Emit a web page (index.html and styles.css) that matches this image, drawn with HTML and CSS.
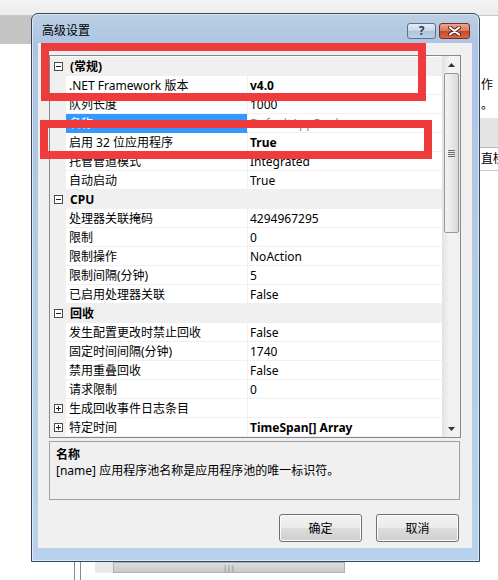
FILE: index.html
```html
<!DOCTYPE html>
<html lang="zh-CN">
<head>
  <meta charset="UTF-8" />
  <title>高级设置</title>
  <link rel="stylesheet" href="styles.css">
</head>
<body>

  <!-- window behind the dialog -->
  <div class="desk">
    <div class="desk-top"></div>
    <div class="desk-band"><div class="desk-band-left"></div></div>
    <div class="desk-main">
      <div class="desk-side">
        <span class="side-text first">作</span>
        <span class="side-text">。</span>
        <div class="side-btn"></div>
        <span class="side-text line">直楼</span>
      </div>
    </div>
    <div class="desk-bottom">
      <div class="vlines"></div>
      <div class="hscroll">
        <span class="hs-arrow"></span>
        <div class="hs-thumb">|||</div>
      </div>
    </div>
  </div>

  <!-- Advanced settings dialog -->
  <div class="dialog">
    <div class="titlebar">
      <span class="title">高级设置</span>
      <div class="title-btns">
        <span class="tbtn help">?</span>
        <span class="tbtn close">
          <svg width="13" height="10" viewBox="0 0 13 10">
            <path d="M2 1.5 L11 8.5 M11 1.5 L2 8.5" stroke="#5a2016" stroke-width="4" stroke-linecap="round"/>
            <path d="M2 1.5 L11 8.5 M11 1.5 L2 8.5" stroke="#fff" stroke-width="2.2" stroke-linecap="round"/>
          </svg>
        </span>
      </div>
    </div>

    <div class="client">
      <div class="pgrid">
        <div class="pg-rows">
          <div class="pg-row cat"><span class="gut"><i class="exp"></i></span><span class="cn">(常规)</span></div>
          <div class="pg-row"><span class="gut"></span><span class="pn">.NET Framework 版本</span><span class="pv b">v4.0</span></div>
          <div class="pg-row"><span class="gut"></span><span class="pn">队列长度</span><span class="pv">1000</span></div>
          <div class="pg-row"><span class="gut"></span><span class="pn sel">名称</span><span class="pv dim">DefaultAppPool</span></div>
          <div class="pg-row"><span class="gut"></span><span class="pn">启用 32 位应用程序</span><span class="pv b">True</span></div>
          <div class="pg-row"><span class="gut"></span><span class="pn">托管管道模式</span><span class="pv">Integrated</span></div>
          <div class="pg-row"><span class="gut"></span><span class="pn">自动启动</span><span class="pv">True</span></div>
          <div class="pg-row cat"><span class="gut"><i class="exp"></i></span><span class="cn">CPU</span></div>
          <div class="pg-row"><span class="gut"></span><span class="pn">处理器关联掩码</span><span class="pv">4294967295</span></div>
          <div class="pg-row"><span class="gut"></span><span class="pn">限制</span><span class="pv">0</span></div>
          <div class="pg-row"><span class="gut"></span><span class="pn">限制操作</span><span class="pv">NoAction</span></div>
          <div class="pg-row"><span class="gut"></span><span class="pn">限制间隔(分钟)</span><span class="pv">5</span></div>
          <div class="pg-row"><span class="gut"></span><span class="pn">已启用处理器关联</span><span class="pv">False</span></div>
          <div class="pg-row cat"><span class="gut"><i class="exp"></i></span><span class="cn">回收</span></div>
          <div class="pg-row"><span class="gut"></span><span class="pn">发生配置更改时禁止回收</span><span class="pv">False</span></div>
          <div class="pg-row"><span class="gut"></span><span class="pn">固定时间间隔(分钟)</span><span class="pv">1740</span></div>
          <div class="pg-row"><span class="gut"></span><span class="pn">禁用重叠回收</span><span class="pv">False</span></div>
          <div class="pg-row"><span class="gut"></span><span class="pn">请求限制</span><span class="pv">0</span></div>
          <div class="pg-row"><span class="gut"><i class="exp plus"></i></span><span class="pn">生成回收事件日志条目</span><span class="pv"></span></div>
          <div class="pg-row"><span class="gut"><i class="exp plus"></i></span><span class="pn">特定时间</span><span class="pv b">TimeSpan[] Array</span></div>
        </div>
        <div class="vscroll">
          <div class="sb-btn">
            <svg width="7" height="4" viewBox="0 0 7 4"><polygon points="0,4 3.5,0 7,4" fill="#333"/></svg>
          </div>
          <div class="sb-track">
            <div class="sb-thumb"><span class="grip"></span></div>
          </div>
          <div class="sb-btn">
            <svg width="7" height="4" viewBox="0 0 7 4"><polygon points="0,0 3.5,4 7,0" fill="#333"/></svg>
          </div>
        </div>
      </div>

      <div class="desc">
        <div class="desc-title">名称</div>
        <div>[name] 应用程序池名称是应用程序池的唯一标识符。</div>
      </div>

      <div class="actions">
        <button class="btn">确定</button>
        <button class="btn">取消</button>
      </div>
    </div>
  </div>

  <!-- red highlight marks drawn over the screenshot -->
  <div class="mark mark-1"></div>
  <div class="mark mark-2"></div>

</body>
</html>
```

FILE: styles.css
```css
* { margin: 0; padding: 0; box-sizing: border-box; }

body {
  width: 498px;
  height: 580px;
  overflow: hidden;
  position: relative;
  background: #fff;
  color: #000;
  font-family: 'Noto Sans', 'Noto Sans CJK SC', sans-serif;
  font-size: 12px;
}

/* background window */
.desk { display: flex; flex-direction: column; height: 580px; }

.desk-top {
  height: 16px;
  background: linear-gradient(#f4f4f4, #ececec);
  border-bottom: 1px solid #c9c9c9;
}

.desk-band { height: 28px; display: flex; }
.desk-band-left { width: 32px; background: #c4c4c4; }

.desk-main { height: 518px; display: flex; justify-content: flex-end; }

.desk-side {
  width: 18px;
  padding-top: 33px;
  display: flex;
  flex-direction: column;
  overflow: hidden;
}

.side-text { line-height: 16px; white-space: nowrap; padding-left: 1px; }
.side-text + .side-text { margin-top: 4px; }
.side-btn { height: 30px; margin-top: 5px; background: #e4e4e4; border-bottom: 1px solid #b9b9b9; }
.side-text.line { margin-top: 3px; border-bottom: 1px solid #c8c8c8; padding-bottom: 3px; }

.desk-bottom { height: 18px; display: flex; padding-left: 74px; }
.vlines { width: 7px; border-left: 1px solid #8c8c8c; border-right: 1px solid #8c8c8c; }

.hscroll {
  margin-left: 14px;
  width: 250px;
  height: 11px;
  display: flex;
  background: #d9d9d9;
}
.hs-arrow { width: 18px; background: #e9e9e9; }
.hs-thumb {
  flex: 1;
  background: linear-gradient(#dcdcdc, #c9c9c9);
  border: 1px solid #b0b0b0;
  color: #777;
  font-size: 7px;
  line-height: 9px;
  text-align: center;
}

/* dialog */
.dialog {
  position: absolute;
  left: 31px;
  top: 13px;
  width: 449px;
  height: 549px;
  border: 1px solid #34465a;
  border-radius: 7px 7px 0 0;
  background: linear-gradient(#bccfe4 0, #adc5e2 30px, #b8d1ec 100%);
  box-shadow: inset 0 0 0 1px rgba(255,255,255,0.55);
  display: flex;
  flex-direction: column;
}

.titlebar {
  height: 29px;
  display: flex;
  align-items: flex-start;
  padding: 9px 9px 0 10px;
}

.title { line-height: 16px; font-size: 12px; }

.title-btns { margin-left: auto; display: flex; gap: 3px; }

.tbtn {
  height: 16px;
  border: 1px solid #5d7089;
  border-radius: 3px;
  display: flex;
  align-items: center;
  justify-content: center;
}

.help {
  width: 29px;
  background: linear-gradient(#e3ecf6 0, #c8d7e9 50%, #aec3dd 50%, #bcd0e6 100%);
  color: #2c3d58;
  font-weight: bold;
  font-size: 12px;
  line-height: 14px;
}

.close {
  width: 31px;
  border-color: #7a2d22;
  background: linear-gradient(#eaa692 0, #d9785f 50%, #c4462b 50%, #d66a48 100%);
}

.client {
  margin: 0 7px 13px 6px;
  height: 505px;
  background: #f0f0f0;
  padding: 12px 13px 0 11px;
  display: flex;
  flex-direction: column;
}

/* property grid */
.pgrid {
  width: 412px;
  height: 383px;
  border: 1px solid #828790;
  background: #fff;
  display: flex;
}

.pg-rows { flex: 1; padding-top: 1px; }

.pg-row { height: 19px; display: flex; line-height: 20px; }

.gut {
  width: 16px;
  background: #f0f0f0;
  display: flex;
  align-items: center;
  justify-content: center;
}

.exp {
  width: 9px;
  height: 9px;
  border: 1px solid #4a4a4a;
  background: #fff;
  position: relative;
}
.exp::before {
  content: '';
  position: absolute;
  left: 1px; top: 3px;
  width: 5px; height: 1px;
  background: #222;
}
.exp.plus::after {
  content: '';
  position: absolute;
  left: 3px; top: 1px;
  width: 1px; height: 5px;
  background: #222;
}

.pn {
  width: 182px;
  padding-left: 3px;
  border-right: 1px solid #f0f0f0;
  border-bottom: 1px solid #f0f0f0;
  white-space: nowrap;
  overflow: hidden;
}

.pv {
  flex: 1;
  padding-left: 2px;
  border-bottom: 1px solid #f0f0f0;
  white-space: nowrap;
  overflow: hidden;
}

.pn.sel { background: #3399ff; color: #fff; border-bottom-color: #3399ff; }
.pv.dim { color: #8a8a8a; }
.b { font-weight: bold; }

.pg-row.cat { background: #f0f0f0; font-weight: bold; }
.cn { padding-left: 4px; }

.vscroll {
  width: 18px;
  display: flex;
  flex-direction: column;
  background: linear-gradient(90deg, #e4e4e4, #f3f3f3 40%, #f0f0f0);
  border-left: 1px solid #e2e2e2;
}

.sb-btn {
  height: 17px;
  display: flex;
  align-items: center;
  justify-content: center;
}

.sb-track { flex: 1; padding: 0 1px; }

.sb-thumb {
  height: 160px;
  border: 1px solid #979797;
  border-radius: 2px;
  background: linear-gradient(90deg, #f3f3f3, #e8e8e8 50%, #d9d9d9);
  display: flex;
  align-items: center;
  justify-content: center;
}

.grip {
  width: 7px;
  height: 7px;
  background: repeating-linear-gradient(#6f6f6f 0 1px, transparent 1px 2px);
}

/* description */
.desc {
  margin-top: 3px;
  width: 411px;
  height: 59px;
  border: 1px solid #a0a0a0;
  padding: 5px 6px 0;
  line-height: 16px;
}

.desc-title { font-weight: bold; }

.actions {
  margin-top: 14px;
  display: flex;
  justify-content: flex-end;
  gap: 14px;
}

.btn {
  width: 83px;
  height: 28px;
  border: 1px solid #707070;
  border-radius: 3px;
  background: linear-gradient(#f2f2f2 0, #ebebeb 50%, #dddddd 50%, #cfcfcf 100%);
  box-shadow: inset 0 0 0 1px #fcfcfc;
  font-family: 'Noto Sans', 'Noto Sans CJK SC', sans-serif;
  font-size: 12px;
  color: #000;
}

/* red annotation boxes */
.mark {
  position: absolute;
  border: 8px solid #ef3b3b;
}
.mark-1 { left: 41px; top: 43px; width: 385px; height: 58px; }
.mark-2 { left: 40px; top: 120px; width: 392px; height: 39px; }
```
